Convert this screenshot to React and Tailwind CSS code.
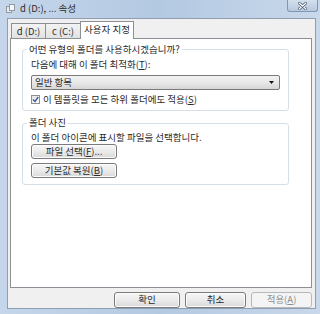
import React from "react";

const font = { fontFamily: '"Noto Sans CJK KR", "Noto Sans", sans-serif' };

function Btn({ children, className = "", disabled = false }) {
  return (
    <div
      className={
        "flex items-center justify-center rounded-[3px] border text-[9.5px] leading-none " +
        (disabled
          ? "border-[#b5b9bc] bg-[#f4f4f4] text-[#8d8d8d] "
          : "border-[#7a7a7a] bg-gradient-to-b from-[#f6f6f6] via-[#ebebeb] to-[#d9d9d9] text-[#2a2a2a] shadow-[inset_0_0_0_1px_#fcfcfc] ") +
        className
      }
    >
      {children}
    </div>
  );
}

export default function App() {
  return (
    <div
      style={font}
      className="w-[320px] h-[314px] overflow-hidden flex flex-col bg-gradient-to-r from-[#c5d6ea] via-[#b3c9e2] to-[#c9d8ea] text-[#2a2a2a]"
    >
      {/* title bar */}
      <div className="h-[18px] flex items-start shrink-0">
        <div className="mt-[4px] ml-[6px] w-[9px] h-[9px] relative">
          <div className="absolute left-[0px] top-[2px] w-[6px] h-[7px] bg-[#e8ecef] border border-[#8f9aa5]" />
          <div className="absolute left-[3px] top-[0px] w-[6px] h-[7px] bg-[#f4f6f8] border border-[#8f9aa5]" />
        </div>
        <div className="ml-[5px] mt-[3px] text-[9.5px] leading-[11px] text-[#2b2b2b]">d (D:), ... 속성</div>
        <div className="ml-auto mr-[2px] w-[31px] h-[12px] rounded-b-[3px] border border-t-0 border-[#8197b6] bg-gradient-to-b from-[#d3dfed] to-[#b7c9df] flex items-center justify-center">
          <svg width="9" height="8" viewBox="0 0 9 8">
            <path d="M1 1 L8 7 M8 1 L1 7" stroke="#3a4a5e" strokeWidth="2.6" strokeLinecap="round" />
            <path d="M1 1 L8 7 M8 1 L1 7" stroke="#ffffff" strokeWidth="1.3" strokeLinecap="round" />
          </svg>
        </div>
      </div>

      {/* client area */}
      <div className="ml-[7px] mr-[4px] h-[291px] border border-[#8f9eb1] bg-[#f0f0f0] flex flex-col pl-[2px] pr-[3px] pt-[2px]">
        {/* tabs */}
        <div className="flex items-end h-[17px] pl-[1px]">
          <div className="h-[15px] w-[35px] border border-b-0 border-[#8c8f96] bg-gradient-to-b from-[#f3f3f3] to-[#e2e2e2] text-[9.5px] leading-[14px] text-center">d (D:)</div>
          <div className="h-[15px] w-[35px] border border-b-0 border-l-0 border-[#8c8f96] bg-gradient-to-b from-[#f3f3f3] to-[#e2e2e2] text-[9.5px] leading-[14px] text-center">c (C:)</div>
          <div className="relative -ml-[1px] h-[18px] w-[54px] border border-b-0 border-[#8c8f96] bg-white text-[9.5px] leading-[15px] text-center z-10 -mb-[1px]">사용자 지정</div>
        </div>
        {/* panel */}
        <div className="w-[302px] h-[251px] border border-[#8c8f96] bg-white pt-[10px] pl-[11px]">
          {/* group 1 */}
          <div className="relative w-[267px] h-[62px] border border-[#d5dfe5] rounded-[3px] pl-[8px] pt-[8px]">
            <div className="absolute -top-[6px] left-[4px] bg-white px-[2px] text-[9.5px] leading-[11px]">어떤 유형의 폴더를 사용하시겠습니까?</div>
            <div className="text-[9.5px] leading-[11px] mt-[1px]">
              다음에 대해 이 폴더 최적화(<span className="underline">T</span>):
            </div>
            <div className="mt-[5px] w-[249px] h-[15px] rounded-[2px] border border-[#7a7a7a] bg-gradient-to-b from-[#f3f3f3] via-[#e8e8e8] to-[#d6d6d6] flex items-center pl-[3px] pr-[5px]">
              <span className="text-[9.5px] leading-none">일반 항목</span>
              <svg className="ml-auto" width="5" height="3" viewBox="0 0 5 3">
                <path d="M0 0 L5 0 L2.5 3 Z" fill="#111" />
              </svg>
            </div>
            <div className="mt-[4px] flex items-center">
              <div className="w-[9px] h-[9px] border border-[#8e8f8f] bg-gradient-to-br from-[#e4e4e4] to-[#fafafa] flex items-center justify-center">
                <svg width="7" height="7" viewBox="0 0 7 7">
                  <path d="M1 3.5 L3 5.5 L6.2 1" stroke="#3c5a9a" strokeWidth="1.4" fill="none" />
                </svg>
              </div>
              <span className="ml-[3px] text-[9.5px] leading-[11px]">
                이 템플릿을 모든 하위 폴더에도 적용(<span className="underline">S</span>)
              </span>
            </div>
          </div>
          {/* group 2 */}
          <div className="relative mt-[12px] w-[267px] h-[62px] border border-[#d5dfe5] rounded-[3px] pl-[8px] pt-[8px]">
            <div className="absolute -top-[7px] left-[4px] bg-white px-[2px] text-[9.5px] leading-[11px]">폴더 사진</div>
            <div className="text-[9.5px] leading-[11px]">이 폴더 아이콘에 표시할 파일을 선택합니다.</div>
            <Btn className="mt-[1px] w-[86px] h-[15px]">
              파일 선택(<span className="underline">F</span>)...
            </Btn>
            <Btn className="mt-[4px] w-[86px] h-[15px]">
              기본값 복원(<span className="underline">B</span>)
            </Btn>
          </div>
        </div>
        {/* bottom buttons */}
        <div className="flex justify-end gap-[5px] mt-[4px]">
          <Btn className="w-[66px] h-[16px]">확인</Btn>
          <Btn className="w-[61px] h-[16px]">취소</Btn>
          <Btn disabled className="w-[61px] h-[16px]">
            적용(<span className="underline">A</span>)
          </Btn>
        </div>
      </div>
    </div>
  );
}
